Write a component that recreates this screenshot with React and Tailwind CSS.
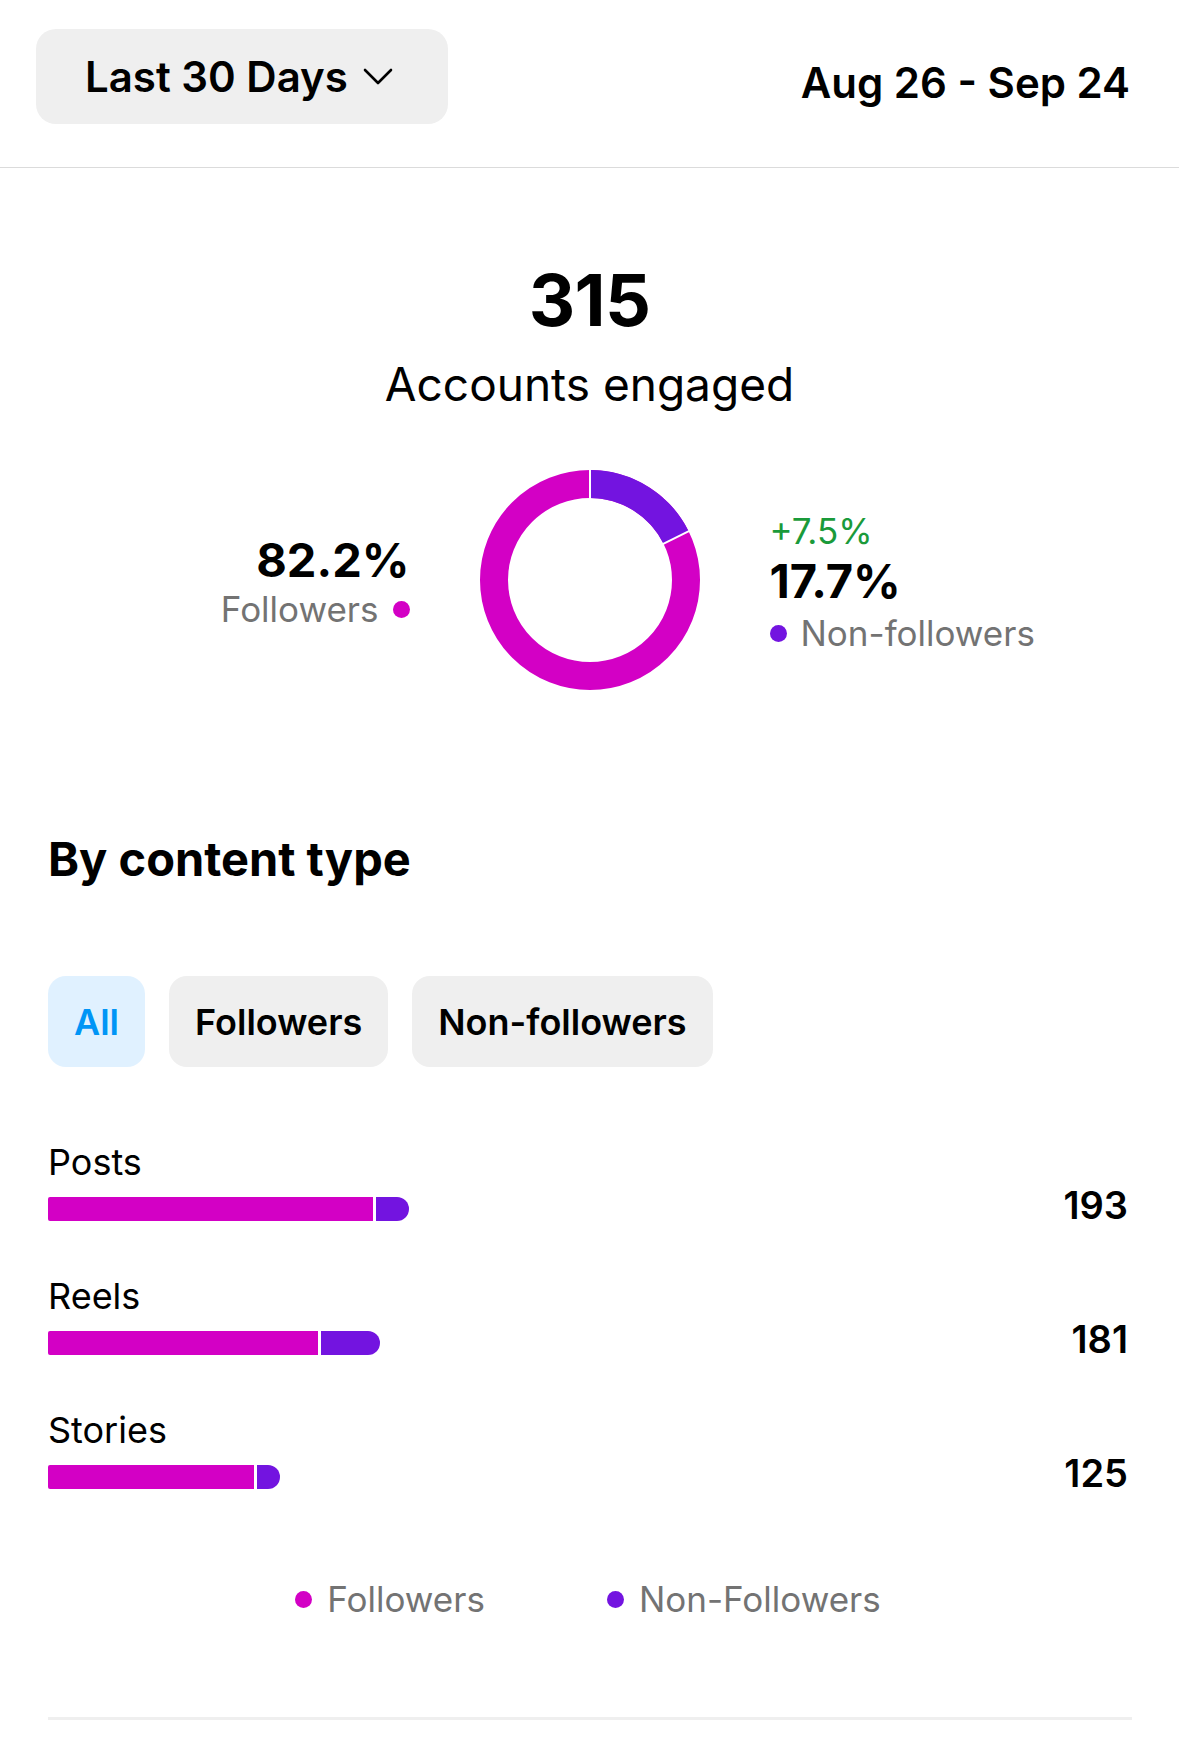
const PINK = '#d300c5';
const PURPLE = '#7314e0';

const ROWS = [
  { label: 'Posts', value: 193, fol: 325, non: 33 },
  { label: 'Reels', value: 181, fol: 270, non: 59 },
  { label: 'Stories', value: 125, fol: 206, non: 23 },
];

function Chevron() {
  return (
    <svg width="30" height="17" viewBox="0 0 30 17" fill="none" className="shrink-0">
      <path d="M2 2 L15 15 L28 2" stroke="#000" strokeWidth="2.6" strokeLinecap="round" strokeLinejoin="round" />
    </svg>
  );
}

function Donut({ share }) {
  const r = 96;
  const c = 2 * Math.PI * r;
  const a = share * 2 * Math.PI;
  const sx = Math.sin(a), sy = -Math.cos(a);
  return (
    <svg width="220" height="220" viewBox="0 0 220 220" className="shrink-0">
      <circle cx="110" cy="110" r={r} fill="none" stroke={PINK} strokeWidth="28" />
      <circle cx="110" cy="110" r={r} fill="none" stroke={PURPLE} strokeWidth="28"
        strokeDasharray={`${c * share} ${c}`} transform="rotate(-90 110 110)" />
      <line x1="110" y1="-2" x2="110" y2="30" stroke="#fff" strokeWidth="2" />
      <line x1={110 + 80 * sx} y1={110 + 80 * sy} x2={110 + 112 * sx} y2={110 + 112 * sy} stroke="#fff" strokeWidth="2" />
    </svg>
  );
}

function Dot({ color }) {
  return <span className="inline-block w-[17px] h-[17px] rounded-full shrink-0" style={{ background: color }} />;
}

export default function App() {
  return (
    <div className="w-full min-h-[1758px] bg-white text-black font-['Inter','Noto_Sans',sans-serif]">
      {/* header */}
      <div className="h-[168px] border-b border-[#dbdbdb] pl-[36px] pr-[49px] flex items-start justify-between">
        <button className="mt-[29px] h-[95px] w-[412px] rounded-[20px] bg-[#efefef] flex items-center pl-[49px] gap-[15px]">
          <span className="text-[42px] leading-none font-semibold">Last 30 Days</span>
          <Chevron />
        </button>
        <div className="mt-[62px] text-[42px] leading-none font-semibold">Aug 26 - Sep 24</div>
      </div>

      {/* accounts engaged */}
      <div className="flex flex-col items-center">
        <div className="mt-[96px] text-[72px] leading-none font-bold tracking-[-0.01em]">315</div>
        <div className="mt-[25px] text-[46px] leading-none">Accounts engaged</div>
        <div className="mt-[63px] w-full grid grid-cols-[1fr_auto_1fr] gap-[70px] items-center">
          <div className="flex flex-col items-end pt-[2px]">
            <div className="text-[47px] leading-none font-bold">82.2%</div>
            <div className="mt-[9px] flex items-center gap-[14px] text-[35px] leading-none text-[#737373]">
              Followers <Dot color={PINK} />
            </div>
          </div>
          <Donut share={0.177} />
          <div className="flex flex-col items-start pt-[5px]">
            <div className="text-[35px] leading-none text-[#1a9a3a]">+7.5%</div>
            <div className="mt-[8px] text-[47px] leading-none font-bold">17.7%</div>
            <div className="mt-[12px] flex items-center gap-[14px] text-[35px] leading-none text-[#737373]">
              <Dot color={PURPLE} /> Non-followers
            </div>
          </div>
        </div>
      </div>

      {/* by content type */}
      <div className="pl-[48px] pr-[51px]">
        <h2 className="mt-[145px] text-[47px] leading-none font-bold">By content type</h2>

        <div className="mt-[94px] flex gap-[24px]">
          <button className="h-[91px] px-[26px] rounded-[18px] bg-[#e0f1ff] text-[#0095f6] text-[36px] font-semibold">All</button>
          <button className="h-[91px] px-[26px] rounded-[18px] bg-[#efefef] text-[36px] font-semibold">Followers</button>
          <button className="h-[91px] px-[26px] rounded-[18px] bg-[#efefef] text-[36px] font-semibold">Non-followers</button>
        </div>

        <div className="mt-[77px] flex flex-col gap-[57px]">
          {ROWS.map((r) => (
            <div key={r.label}>
              <div className="text-[36px] leading-none">{r.label}</div>
              <div className="mt-[17px] h-[24px] flex items-center justify-between">
                <div className="flex h-[24px] gap-[3px]">
                  <div className="h-full rounded-l-[2px]" style={{ width: r.fol, background: PINK }} />
                  <div className="h-full rounded-r-full" style={{ width: r.non, background: PURPLE }} />
                </div>
                <div className="mb-[9px] text-[38px] leading-none font-semibold">{r.value}</div>
              </div>
            </div>
          ))}
        </div>

        <div className="mt-[93px] flex justify-center gap-[122px] text-[35px] leading-none text-[#737373]">
          <div className="flex items-center gap-[15px]"><Dot color={PINK} /> Followers</div>
          <div className="flex items-center gap-[15px]"><Dot color={PURPLE} /> Non-Followers</div>
        </div>

        <div className="mt-[100px] -mr-[4px] h-[3px] bg-[#efefef]" />
      </div>
    </div>
  );
}
